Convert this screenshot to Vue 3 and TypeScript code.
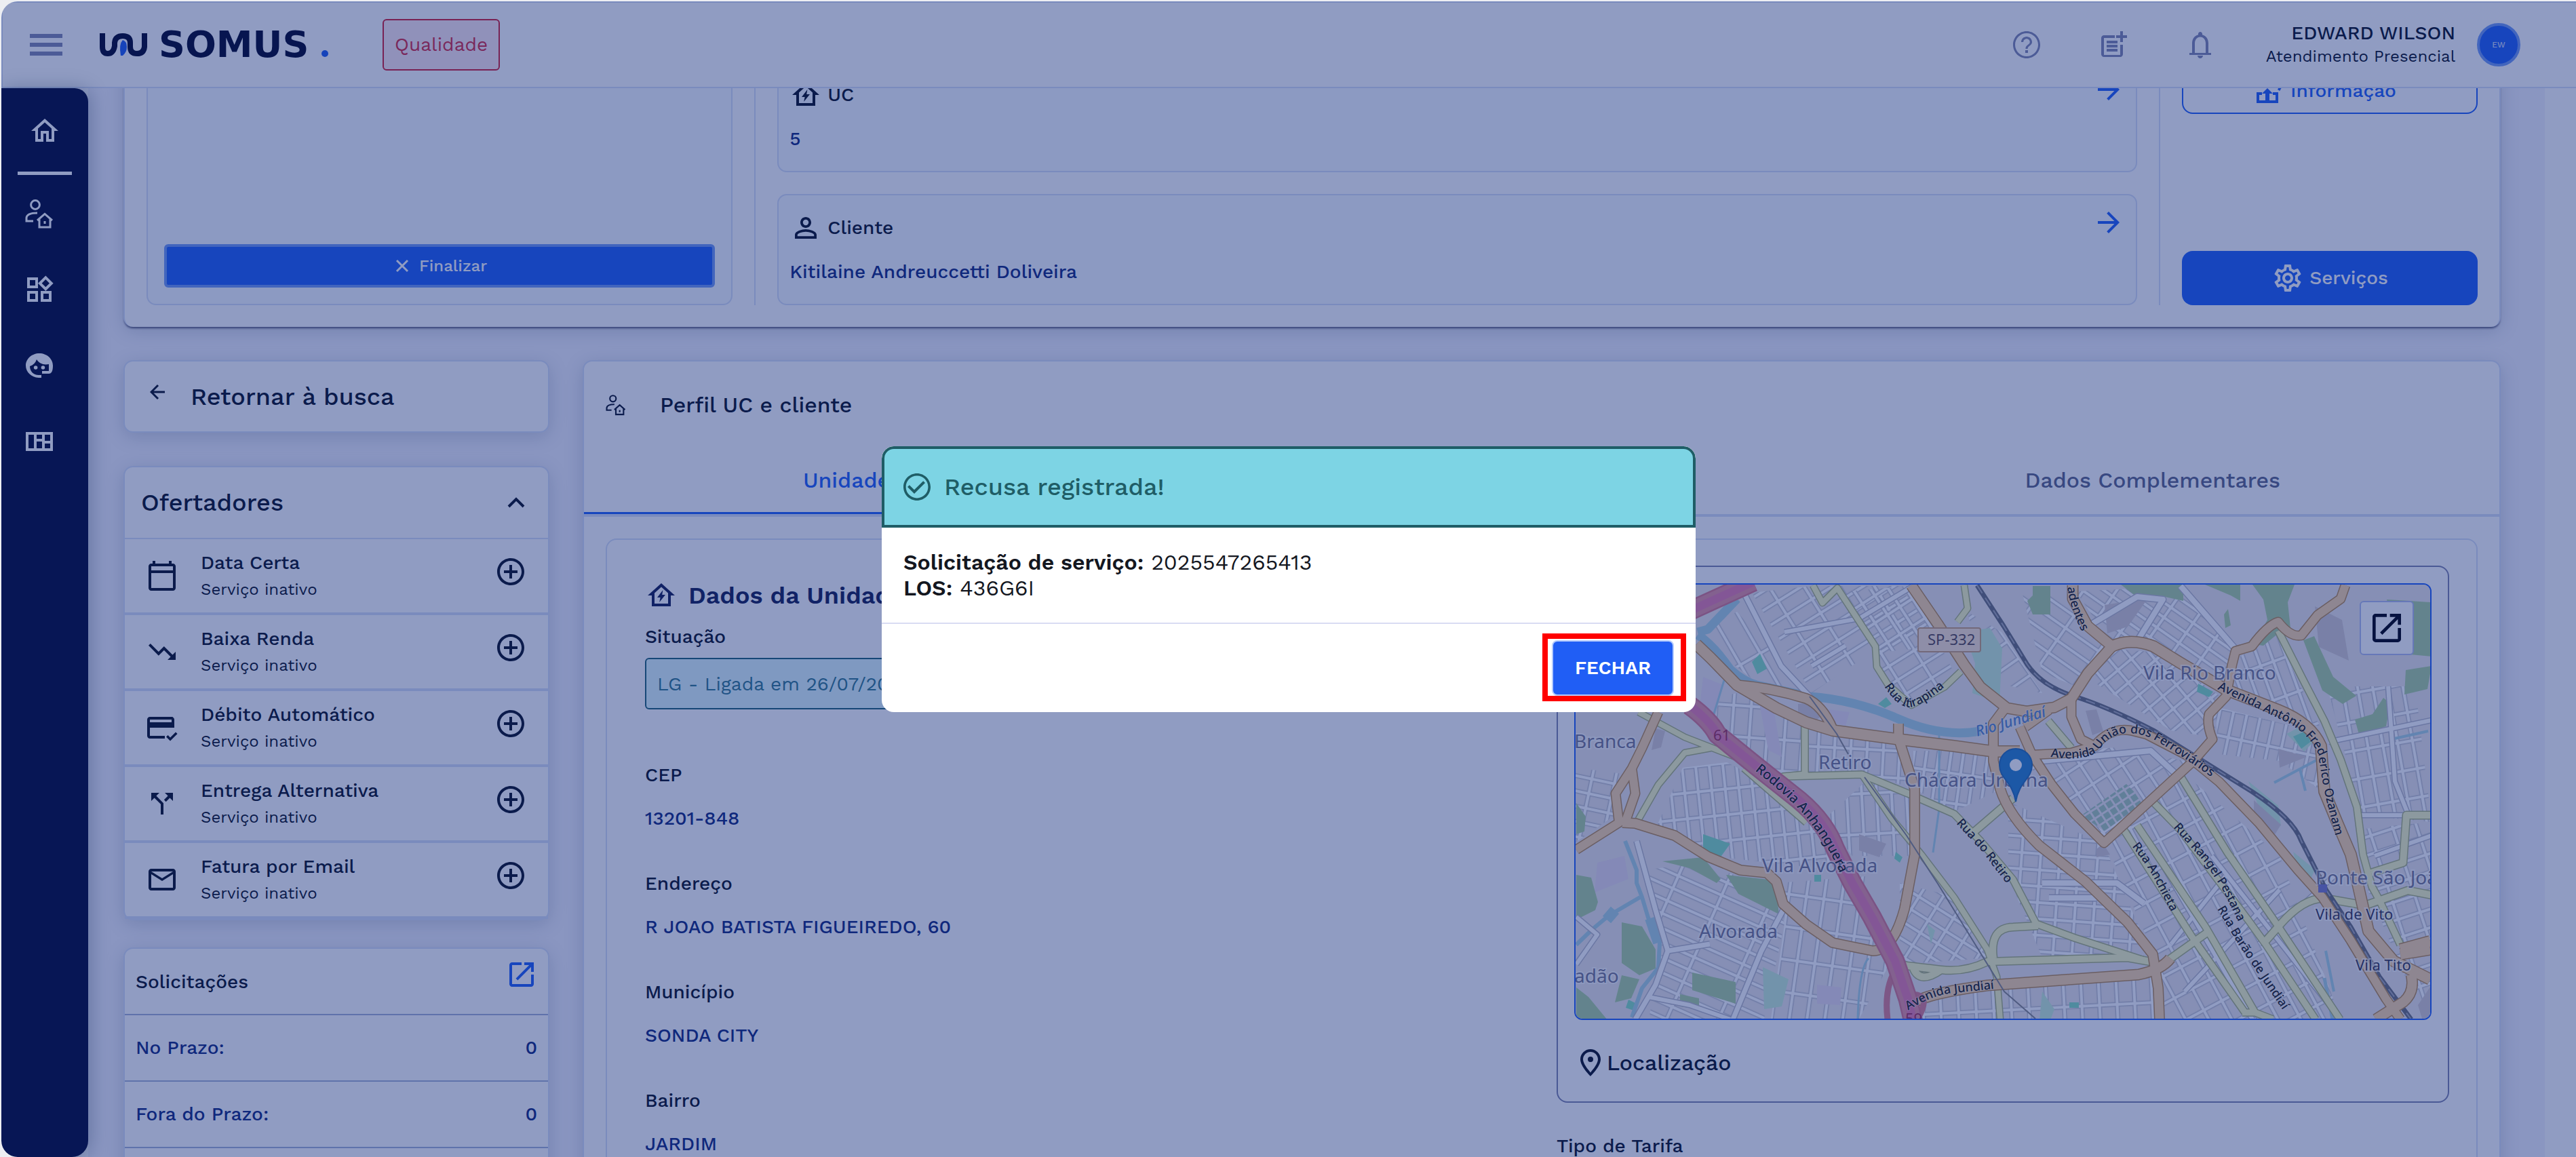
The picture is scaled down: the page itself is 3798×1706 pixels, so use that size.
<script setup lang="ts">
import { ref } from 'vue'

interface Offer { name: string; icon: string }
interface Field { label: string; value: string }
interface Road { d: string; w: number }
interface District { points: string; angle: number; w: number; h: number }
interface Place { x: number; y: number; text: string; minor?: boolean }
interface Street { id: string; d: string; text: string; size?: number; river?: boolean }

const icons = {
  help: 'M11 18h2v-2h-2v2zm1-16C6.48 2 2 6.48 2 12s4.48 10 10 10 10-4.48 10-10S17.52 2 12 2zm0 18.5c-4.69 0-8.5-3.81-8.5-8.5S7.31 3.5 12 3.5s8.5 3.81 8.5 8.5-3.81 8.5-8.5 8.5zm0-14.5c-2.21 0-4 1.79-4 4h1.6c0-1.33 1.07-2.4 2.4-2.4s2.4 1.07 2.4 2.4c0 2-3.2 1.9-3.2 5h1.6c0-2.25 3.2-2.5 3.2-5 0-2.21-1.79-4-4-4z',
  postAdd: 'M17 19.5H5V7h8V5H5c-1.1 0-2 .9-2 2v12c0 1.1.9 2 2 2h12c1.1 0 2-.9 2-2v-7h-2zM19 2h-2v3h-3v2h3v3h2V7h3V5h-3zM7 9h8v2H7zM7 12h8v2H7zM7 15h8v2H7z',
  bell: 'M12 22c1.1 0 2-.9 2-2h-4c0 1.1.9 2 2 2zm6-4v-7c0-3.07-1.63-5.64-4.5-6.32V4c0-.83-.67-1.5-1.5-1.5s-1.5.67-1.5 1.5v.68C7.64 5.36 6 7.92 6 11v7H4v1.5h16V18zm-2 0H8v-7c0-2.48 1.51-4.7 4-4.7s4 2.22 4 4.7z',
  home: 'M12 5.69l5 4.5V18h-2v-6H9v6H7v-7.81l5-4.5M12 3L2 12h3v8h6v-6h2v6h6v-8h3L12 3z',
  widgets: 'M16.66 4.52l2.83 2.83-2.83 2.83-2.83-2.83 2.83-2.83M9 5v4H5V5h4m10 10v4h-4v-4h4M9 15v4H5v-4h4m7.66-13.31L11 7.34 16.66 13l5.66-5.66-5.66-5.65zM11 3H3v8h8V3zm10 10h-8v8h8v-8zm-10 0H3v8h8v-8z',
  board: 'M2 5v14h20V5zm2 2h4v10H4zm6 0h4v3h-4zm6 0h4v4.5h-4zm-6 5h4v5h-4zm6 1.5h4V17h-4z',
  calendar: 'M20 3h-1V1h-2v2H7V1H5v2H4c-1.1 0-2 .9-2 2v16c0 1.1.9 2 2 2h16c1.1 0 2-.9 2-2V5c0-1.1-.9-2-2-2zm0 18H4V10h16v11zm0-13H4V5h16v3z',
  down: 'M16 18l2.29-2.29-4.88-4.88-4 4L2 7.41 3.41 6l6 6 4-4 6.3 6.29L22 12v6z',
  card: 'M19 4H3c-1.1 0-2 .9-2 2v12c0 1.1.9 2 2 2h11v-2H3v-6h18V6c0-1.1-.9-2-2-2zm0 4H3V6h16zM18 21.8l-3-3 1.3-1.3 1.7 1.7 4-4 1.3 1.3z',
  split: 'M14 4l2.29 2.29-2.88 2.88 1.42 1.42 2.88-2.88L20 10V4zm-4 0H4v6l2.29-2.29 4.71 4.7V20h2v-8.41l-5.29-5.3z',
  mail: 'M22 6c0-1.1-.9-2-2-2H4c-1.1 0-2 .9-2 2v12c0 1.1.9 2 2 2h16c1.1 0 2-.9 2-2V6zm-2 0l-8 5-8-5h16zm0 12H4V8l8 5 8-5v10z',
  plus: 'M13 7h-2v4H7v2h4v4h2v-4h4v-2h-4V7zm-1-5C6.48 2 2 6.48 2 12s4.48 10 10 10 10-4.48 10-10S17.52 2 12 2zm0 18c-4.41 0-8-3.59-8-8s3.59-8 8-8 8 3.59 8 8-3.59 8-8 8z',
  open: 'M19 19H5V5h7V3H5c-1.11 0-2 .9-2 2v14c0 1.1.89 2 2 2h14c1.1 0 2-.9 2-2v-7h-2v7zM14 3v2h3.59l-9.83 9.83 1.41 1.41L19 6.41V10h2V3h-7z',
  person: 'M12 5.9a2.1 2.1 0 110 4.2 2.1 2.1 0 010-4.2m0 9c2.97 0 6.1 1.46 6.1 2.1v1.1H5.9V17c0-.64 3.13-2.1 6.1-2.1M12 4C9.79 4 8 5.79 8 8s1.79 4 4 4 4-1.79 4-4-1.79-4-4-4zm0 9c-2.67 0-8 1.34-8 4v3h16v-3c0-2.66-5.33-4-8-4z',
  houseBolt: 'M12 3L2 12h3v8h14v-8h3zM7 18v-7.8l5-4.5 5 4.5V18zM13.2 8l-4.2 5.5h2.3l-.7 3.5 4.4-5.5h-2.4z',
  gear: 'M19.43 12.98c.04-.32.07-.64.07-.98 0-.34-.03-.66-.07-.98l2.11-1.65c.19-.15.24-.42.12-.64l-2-3.46c-.09-.16-.26-.25-.44-.25-.06 0-.12.01-.17.03l-2.49 1c-.52-.4-1.08-.73-1.69-.98l-.38-2.65C14.46 2.18 14.25 2 14 2h-4c-.25 0-.46.18-.49.42l-.38 2.65c-.61.25-1.17.59-1.69.98l-2.49-1c-.06-.02-.12-.03-.18-.03-.17 0-.34.09-.43.25l-2 3.46c-.13.22-.07.49.12.64l2.11 1.65c-.04.32-.07.65-.07.98 0 .33.03.66.07.98l-2.11 1.65c-.19.15-.24.42-.12.64l2 3.46c.09.16.26.25.44.25.06 0 .12-.01.17-.03l2.49-1c.52.4 1.08.73 1.69.98l.38 2.65c.03.24.24.42.49.42h4c.25 0 .46-.18.49-.42l.38-2.65c.61-.25 1.17-.59 1.69-.98l2.49 1c.06.02.12.03.18.03.17 0 .34-.09.43-.25l2-3.46c.12-.22.07-.49-.12-.64l-2.11-1.65zm-1.98-1.71c.04.31.05.52.05.73 0 .21-.02.43-.05.73l-.14 1.13.89.7 1.08.84-.7 1.21-1.27-.51-1.04-.42-.9.68c-.43.32-.84.56-1.25.73l-1.06.43-.16 1.13-.2 1.35h-1.4l-.19-1.35-.16-1.13-1.06-.43c-.43-.18-.83-.41-1.23-.71l-.91-.7-1.06.43-1.27.51-.7-1.21 1.08-.84.89-.7-.14-1.13c-.03-.31-.05-.54-.05-.74s.02-.43.05-.73l.14-1.13-.89-.7-1.08-.84.7-1.21 1.27.51 1.04.42.9-.68c.43-.32.84-.56 1.25-.73l1.06-.43.16-1.13.2-1.35h1.39l.19 1.35.16 1.13 1.06.43c.43.18.83.41 1.23.71l.91.7 1.06-.43 1.27-.51.7 1.21-1.07.85-.89.7.14 1.13zM12 8c-2.21 0-4 1.79-4 4s1.79 4 4 4 4-1.79 4-4-1.79-4-4-4zm0 6c-1.1 0-2-.9-2-2s.9-2 2-2 2 .9 2 2-.9 2-2 2z',
  check: 'M16.59 7.58L10 14.17l-3.59-3.58L5 12l5 5 8-8zM12 2C6.48 2 2 6.48 2 12s4.48 10 10 10 10-4.48 10-10S17.52 2 12 2zm0 18.2c-4.52 0-8.2-3.68-8.2-8.2S7.48 3.8 12 3.8s8.2 3.68 8.2 8.2-3.68 8.2-8.2 8.2z',
  pin: 'M12 2C8.13 2 4.5 5.13 4.5 9.5c0 5.25 7.5 12.5 7.5 12.5s7.5-7.25 7.5-12.5C19.5 5.13 15.87 2 12 2zM6.5 9.5C6.5 6.24 9.24 4 12 4s5.5 2.24 5.5 5.5c0 3-3.38 7.19-5.5 9.7-2.12-2.51-5.5-6.7-5.5-9.7zM12 7.5a2 2 0 100 4 2 2 0 000-4z',
  form: 'M3 21v-8h4v2H5v4h4.5v-5H7l4-4 4 4h-2.500v5H17v-4h-2v-2h4v8zM18.500 11l3.500-6 1.600 1-3.500 6z',
}

const offers: Offer[] = [
  { name: 'Data Certa', icon: icons.calendar },
  { name: 'Baixa Renda', icon: icons.down },
  { name: 'Débito Automático', icon: icons.card },
  { name: 'Entrega Alternativa', icon: icons.split },
  { name: 'Fatura por Email', icon: icons.mail },
]
const deadlines: Field[] = [
  { label: 'No Prazo:', value: '0' },
  { label: 'Fora do Prazo:', value: '0' },
]
const fields: Field[] = [
  { label: 'CEP', value: '13201-848' },
  { label: 'Endereço', value: 'R JOAO BATISTA FIGUEIREDO, 60' },
  { label: 'Município', value: 'SONDA CITY' },
  { label: 'Bairro', value: 'JARDIM' },
]
const tabs = ['Unidade Consumidora', 'Endereços', 'Dados Complementares']
const activeTab = ref(0)
const situation = ref('LG - Ligada em 26/07/2017')
const dialogOpen = ref(true)

const districts: District[] = [
  { points: '262,12 350,2 480,2 535,80 560,130 497,178 455,140 446,95 350,160', angle: -32, w: 44, h: 24 },
  { points: '182,70 240,40 345,160 270,145 225,110', angle: 60, w: 90, h: 34 },
  { points: '400,10 495,2 545,90 450,100', angle: -33, w: 22, h: 34 },
  { points: '185,170 240,160 340,205 340,278 300,280 200,190', angle: 4, w: 26, h: 46 },
  { points: '345,215 480,235 500,300 430,280 345,278', angle: 3, w: 24, h: 40 },
  { points: '500,245 615,245 622,305 560,335 500,300', angle: 8, w: 18, h: 44 },
  { points: '225,262 300,300 380,378 375,420 200,400 120,360 160,270', angle: -6, w: 20, h: 38 },
  { points: '430,290 500,310 495,400 410,400 370,345', angle: -3, w: 22, h: 60 },
  { points: '2,270 80,280 60,340 2,380', angle: 12, w: 34, h: 22 },
  { points: '110,420 190,410 290,450 310,500 280,640 110,640 130,540', angle: 24, w: 70, h: 20 },
  { points: '300,440 430,430 465,560 420,640 290,640 310,500', angle: 8, w: 26, h: 48 },
  { points: '480,440 560,460 615,550 480,560', angle: 32, w: 30, h: 22 },
  { points: '480,605 860,575 862,640 500,640', angle: -3, w: 26, h: 40 },
  { points: '640,320 780,382 850,545 690,550 640,430', angle: 4, w: 28, h: 24 },
  { points: '655,250 700,300 780,378 860,320 910,262 800,240', angle: -33, w: 26, h: 34 },
  { points: '785,385 895,275 1040,400 1130,640 870,640 855,545', angle: -28, w: 30, h: 36 },
  { points: '760,140 800,95 860,100 960,170 940,225 880,215', angle: -40, w: 26, h: 24 },
  { points: '740,10 900,2 975,95 965,150 850,80 790,85', angle: 35, w: 40, h: 18 },
  { points: '975,110 1035,75 1100,210 1030,180 965,150', angle: -20, w: 20, h: 54 },
  { points: '945,180 1085,215 1110,310 1040,260 950,250', angle: 12, w: 20, h: 40 },
  { points: '1110,150 1240,150 1264,350 1160,340', angle: -10, w: 22, h: 42 },
  { points: '1165,360 1264,350 1264,640 1230,590 1170,450', angle: -18, w: 34, h: 26 },
  { points: '580,40 630,70 690,160 600,140', angle: -35, w: 50, h: 30 },
  { points: '660,10 735,20 790,90 740,150 690,130', angle: 35, w: 60, h: 22 },
]

const forests = [
  'M930 0h52v24l-14-8z', 'M1000 0h62l-10 26 4 38-18 8-22 18-14-2 20-36-6-30z', 'M806 0h92v24l-36-8-30 4z',
  'M1075 82l16-6 28 60 34 28-20 12-30-20z', 'M1198 22l66 4v80l-44-4-14-30z', 'M1226 126l38-6-6 34-34 8z',
  'M1193 167l10 8-6 34-40 12-6-22 26-8z', 'M676 2l26 0 0 42-26 0-8-20 8-8z', 'M3 428l22 4 10 36-4 12-28 14z',
  'M70 498l30 6 20 34 0 28-24 10-26-18z', 'M70 576l26 6-12 28-24 6z', 'M3 594l18 14 28 34-46 0z',
  'M174 572l64 14v32l-64-20z', 'M156 604l28 6v16l-28-4z', 'M130 408l60-6 26 32-6 6-40-22z', 'M224 428l72 8 6 50-60-30z', 'M3 322l14 20-2 22-12 4z',
  'M958 44l6-8 4 24-8 4z',
]
const garden = 'M748 340l66-46 26 26-58 44z'
const parks = [
  'M575 70l38-6 18 30-4 80-40-14 4-44z', 'M278 564l38 18-10 40-26 4z', 'M1060 394l32 26-6 14-20-14z', 'M520 500l12 10-6 20z',
  'M690 600l18 26-6 16-16 0z', 'M994 290l44 36 4 30-26-12z', 'M1050 220l20-10 20 22-14 14z',
]
const pitches = ['M262 114l12-12 10 22-14 8z', 'M190 368l40 14-16 22-24-6z', 'M448 176l12-10 8 10-10 6z', 'M920 146l22 12-6 8-18-8z', 'M1060 224l18-8 10 14-16 12z', 'M354 428l10 0 0 10-10 0z', 'M80 612l12 6-4 10-12-4z', 'M474 394l10 8-4 8-8-6z', 'M730 616h14v8h-14z']
const blocks = ['M330 176l24-2 10 20-14 12-20-12z', 'M120 212l14 4-6 24-14 4z', 'M420 368l40 14-10 20-30-10z', 'M782 30l64-10-30 42-30 10z', 'M1038 242l42 12-40 16z', 'M1002 318l40 36-10 16-30-30z', 'M754 186l16-2 10 32-16 6z', 'M770 390l10-8 10 16-20 4z', 'M1092 32l40 20 10 60-44-20z', 'M1244 620l20-30v50h-14z']
const industry = ['M190 136l30 12-16 60-20-20z', 'M272 170l20 0 14 84-20-10z', 'M376 184l30 4-6 20-24-6z', 'M34 410l40-10 6 34-50 20z', 'M358 590l36 4-2 26-34-2z']
const waters = [
  { d: 'M240 21L197 66 182 70M182 74Q206 90 230 125 250 143 269 148L347 165Q415 170 478 198T599 216', w: 13 },
  { d: 'M221 141L203 200M538 218V331L529 395M434 551Q420 565 418 641', w: 3 },
  { d: 'M75 378L92 421 92 440 100 461 109 491 126 528 124 565 100 595 85 638M97 461L51 488 27 508 3 531', w: 6 },
  { d: 'M112 492l12 36M60 480l-12 14', w: 16 },
  { d: 'M1032 292L1096 258M1070 272l8 32M1120 600l-12-60M1205 228l54-12', w: 4 },
  { d: 'M1106 580L1118 641M90 280L78 344', w: 5 },
]
const minor: Road[] = [
  { d: 'M250 12L305 120 347 165 361 185', w: 7 }, { d: 'M310 70L420 50 500 2M350 120l50-30', w: 6 },
  { d: 'M92 378L120 480 138 540 120 590 90 641M138 540L200 530', w: 7 }, { d: 'M308 480L276 540 234 641', w: 7 },
  { d: 'M110 608L170 620 230 641M3 490L34 516 3 560', w: 6 }, { d: 'M690 260L850 245 890 282', w: 8 },
  { d: 'M894 2L975 95M760 60L830 18 868 22 826 90', w: 8 }, { d: 'M940 400L1130 641M860 400L1000 641', w: 6 },
  { d: 'M1112 232L1264 200M1200 150L1210 290 1230 340', w: 6 }, { d: 'M690 440H800L840 470M700 462H770', w: 8 },
  { d: 'M1010 530L1120 430M880 530L960 430M900 600L1040 450', w: 6 }, { d: 'M1150 340h110M1180 400l84-30', w: 6 },
]
const secondary: Road[] = [
  { d: 'M352 1L366 27 388 5 444 91 446 121 463 148 497 178 546 151 570 128', w: 8 },
  { d: 'M575 1L580 35 565 55', w: 8 }, { d: 'M340 208V280L308 283 424 280 492 308 560 338 599 378 647 435 681 500 738 521 843 555', w: 9 },
  { d: 'M424 280L468 345 512 398 560 461 609 538 623 578 628 641', w: 8 },
  { d: 'M647 315L589 365M463 525Q474 560 490 562T541 568 609 556L816 550 850 556M500 566Q510 590 541 568M618 551Q612 506 647 505L684 503', w: 10 },
  { d: 'M95 188L163 225 240 255M201 241L163 248 124 295 92 351M250 271L342 351', w: 8 },
  { d: 'M1038 68L1077 145 1106 201 1130 258 1154 328 1163 398 1176 445 1187 465 1218 531', w: 9 },
  { d: 'M699 201L733 241M893 281L963 395 1036 501 1129 641M854 321L893 361 994 495 1020 531 1093 641', w: 9 },
  { d: 'M830 355L931 505 1004 631 1030 641M810 361L910 518 989 631M1004 631H985', w: 9 },
  { d: 'M1020 525L1041 501Q1077 460 1109 463L1166 473 1229 451 1265 458M874 555L936 511M1265 340H1227L1222 410 1175 425', w: 10 },
]
const primary: Road[] = [
  { d: 'M180 88L201 108 240 148 298 182 342 203 381 215 478 228 560 238 618 246 657 246', w: 15 },
  { d: 'M240 148Q290 152 342 168 366 178 381 213M478 205V226L492 270 502 301V398L487 478Q470 540 440 540L415 535 381 528 342 501 308 471 298 438 284 425 245 421 197 401 148 370 90 352 71 351', w: 13 },
  { d: 'M497 1L536 58 575 118 599 151 638 182 667 187 708 181 733 168 757 131 793 91 757 61 735 21V1', w: 14 },
  { d: 'M793 91Q820 78 854 91L893 115 961 155 1038 185Q1086 204 1101 238L1106 305 1125 351 1145 398 1156 445 1171 511 1208 555 1262 582M1218 538L1262 526M1218 545L1262 538', w: 15 },
  { d: 'M124 188L100 241 85 271 61 308 66 351 3 391M85 271L90 308 75 351', w: 12 },
  { d: 'M633 185L618 205V260L628 301Q640 340 686 385L754 438 816 498 853 545 861 595 863 641', w: 13 },
  { d: 'M657 210L675 251 704 295 738 338 781 381 839 328 912 261 941 228Q932 206 936 191L961 165 970 118 975 98 999 91Q1022 60 1038 55 1056 78 1072 75L1096 45 1130 21 1137 1', w: 12 },
  { d: 'M675 251L733 248 767 238Q790 210 820 215L844 221 902 251 951 291 1009 351 1067 421 1103 461 1145 525 1197 611 1218 641M733 170V195L747 228 767 238M665 210L700 185', w: 12 },
  { d: 'M492 625Q500 605 609 591L832 575Q866 568 879 551M1182 641L1223 615Q1240 600 1234 575', w: 14 },
]
const motorway = 'M172 38L264 -4M170 178Q200 200 211 221L269 268 332 318Q370 350 385 390L410 440 439 490 473 555 492 611 500 645'
const rail = 'M594 1L633 61 668 118Q690 150 738 165T854 215L912 251 999 305Q1060 345 1072 378L1109 451 1145 505 1187 578 1234 641'

const places: Place[] = [
  { x: 839, y: 140, text: 'Vila Rio Branco' }, { x: 360, y: 272, text: 'Retiro' }, { x: 487, y: 298, text: 'Chácara Urbana' },
  { x: 0, y: 241, text: 'Branca' }, { x: 277, y: 424, text: 'Vila Alvorada' }, { x: 184, y: 521, text: 'Alvorada' },
  { x: 0, y: 587, text: 'adão' }, { x: 1093, y: 442, text: 'Ponte São João' },
  { x: 1093, y: 494, text: 'Vila de Vito', minor: true }, { x: 1152, y: 569, text: 'Vila Tito', minor: true },
]
const streets: Street[] = [
  { id: 's1', d: 'M457 150Q480 186 500 180T552 146L600 110', text: 'Rua Itirapina' },
  { id: 's2', d: 'M594 224L712 190', text: 'Rio Jundiaí', size: 22, river: true },
  { id: 's3', d: 'M702 254Q760 262 775 242 800 206 850 226 880 242 940 284L980 320', text: 'Avenida União dos Ferroviários' },
  { id: 's4', d: 'M948 154L1040 198Q1082 216 1097 250 1104 300 1112 330L1130 400', text: 'Avenida Antônio Frederico Ozanam' },
  { id: 's5', d: 'M266 274Q330 324 350 354 375 384 398 440', text: 'Rodovia Anhanguera', size: 20 },
  { id: 's6', d: 'M563 352L600 392 660 470', text: 'Rua do Retiro' },
  { id: 's7', d: 'M822 386Q850 420 862 448L900 520', text: 'Rua Anchieta' },
  { id: 's8', d: 'M883 358L930 410 956 450 1010 560', text: 'Rua Rangel Pestana' },
  { id: 's9', d: 'M948 478L980 532 1060 650', text: 'Rua Barão de Jundiaí' },
  { id: 's10', d: 'M492 628Q530 604 560 602L640 594', text: 'Avenida Jundiaí' },
  { id: 's11', d: 'M727 4Q732 44 760 90', text: 'adentes' },
]
</script>

<template>
  <div class="page">
    <div class="shell">
      <header class="topbar">
        <button class="plain menu" aria-label="Menu"><svg width="48" height="32" viewBox="0 0 48 32"><path d="M0 0h48v6H0zM0 13h48v6H0zM0 26h48v6H0z" /></svg></button>
        <a class="logo" href="#" aria-label="UN Somus">
          <svg class="mark" width="72" height="36" viewBox="0 0 72 36">
            <path d="M5 1v20q0 10 8 10t10-11V15Q24 5 35 5t11 10v6q0 10 10 10t11-10V1" />
            <path class="drop" d="M35 11q6 2 6 10t-6 13h-3q-3-17 3-23z" />
          </svg>
          <span class="word">SOMUS</span><i class="dot"></i>
        </a>
        <span class="env">Qualidade</span>
        <div class="tools">
          <button v-for="(d, k) in { Ajuda: icons.help, Nota: icons.postAdd, Avisos: icons.bell }" :key="k" class="plain" :aria-label="k"><svg class="ic" viewBox="0 0 24 24"><path :d="d" /></svg></button>
        </div>
        <div class="user">
          <div class="who"><b>EDWARD WILSON</b><span>Atendimento Presencial</span></div>
          <span class="avatar">EW</span>
        </div>
      </header>

      <div class="body">
        <nav class="rail">
          <a class="first" href="#" aria-label="Início"><svg class="ic" viewBox="0 0 24 24"><path :d="icons.home" /></svg></a>
          <hr />
          <a href="#" aria-label="Perfil"><svg class="ic line" viewBox="0 0 24 24"><circle cx="9" cy="5.5" r="3.2" /><path d="M7.5 17.5H2.5v-2.5q.5-3.5 8-3.5M10.5 17l5.5-4.8 5.5 4.8M12 16v6h8v-6M16 17.5v2" /></svg></a>
          <a href="#" aria-label="Serviços"><svg class="ic" viewBox="0 0 24 24"><path :d="icons.widgets" /></svg></a>
          <a href="#" aria-label="Atendimento"><svg class="ic" viewBox="0 0 24 24"><path fill-rule="evenodd" d="M12 3C6.5 3 2 7 2 12c0 4.8 4 8.7 9.5 9h2v-2h-2C7.5 19 5 16 5 12.5c2.5-.8 4.2-2.5 5-5 2 3 5 4.3 9 3.5v5h-5v2h5c2 0 3-2 3-6 0-5-4.5-9-10-9z" /><circle cx="9.3" cy="13.5" r="1.4" /><circle cx="14.7" cy="13.5" r="1.4" /></svg></a>
          <a href="#" aria-label="Painel"><svg class="ic" viewBox="0 0 24 24"><path fill-rule="evenodd" :d="icons.board" /></svg></a>
        </nav>

        <main class="content">
          <section class="summary card">
            <div class="pane call"><button class="finish"><svg width="22" height="22" viewBox="0 0 22 22"><path d="M3 3l16 16M19 3L3 19" /></svg>Finalizar</button></div>
            <i class="vr"></i>
            <div class="stack">
              <article class="pane info">
                <h3><svg class="ic" viewBox="0 0 24 24"><path fill-rule="evenodd" :d="icons.houseBolt" /></svg>UC<button class="plain go" aria-label="Abrir UC"><svg width="48" height="32" viewBox="0 4 24 16"><path d="M12 4l-1.4 1.4L16.2 11H4v2h12.2l-5.6 5.6L12 20l8-8z" /></svg></button></h3>
                <p>5</p>
              </article>
              <article class="pane info">
                <h3><svg class="ic" viewBox="0 0 24 24"><path :d="icons.person" /></svg>Cliente<button class="plain go" aria-label="Abrir cliente"><svg width="48" height="32" viewBox="0 4 24 16"><path d="M12 4l-1.4 1.4L16.2 11H4v2h12.2l-5.6 5.6L12 20l8-8z" /></svg></button></h3>
                <p>Kitilaine Andreuccetti Doliveira</p>
              </article>
            </div>
            <i class="vr"></i>
            <div class="actions">
              <button class="outline"><svg class="ic" viewBox="0 0 24 24"><path :d="icons.form" /></svg>Informação</button>
              <button class="solid"><svg class="ic" viewBox="0 0 24 24"><path :d="icons.gear" /></svg>Serviços</button>
            </div>
          </section>

          <div class="columns">
            <aside>
              <button class="card back"><svg width="24" height="24" viewBox="0 0 24 24"><path d="M22 12H3M12 2L2 12l10 10" /></svg>Retornar à busca</button>
              <section class="card offers">
                <h2>Ofertadores<svg width="26" height="16" viewBox="0 0 26 16"><path d="M2 14L13 3l11 11" /></svg></h2>
                <ul>
                  <li v-for="o in offers" :key="o.name">
                    <svg class="ic" viewBox="0 0 24 24"><path :d="o.icon" /></svg>
                    <div><b>{{ o.name }}</b><span>Serviço inativo</span></div>
                    <button class="plain add" :aria-label="'Adicionar ' + o.name"><svg class="ic" viewBox="0 0 24 24"><path :d="icons.plus" /></svg></button>
                  </li>
                </ul>
              </section>
              <section class="card requests">
                <h2>Solicitações<a href="#" aria-label="Abrir solicitações"><svg class="ic" viewBox="0 0 24 24"><path :d="icons.open" /></svg></a></h2>
                <dl><div v-for="d in deadlines" :key="d.label"><dt>{{ d.label }}</dt><dd>{{ d.value }}</dd></div></dl>
              </section>
            </aside>

            <section class="card profile">
              <h2><svg class="line" width="34" height="34" viewBox="0 0 24 24"><circle cx="9" cy="5.5" r="3.2" /><path d="M7.5 17.5H2.5v-2.5q.5-3.5 8-3.5M10.5 17l5.5-4.8 5.5 4.8M12 16v6h8v-6M16 17.5v2" /></svg>Perfil UC e cliente</h2>
              <div class="tabs" role="tablist">
                <button v-for="(t, i) in tabs" :key="t" role="tab" :class="{ on: i === activeTab }" @click="activeTab = i">{{ t }}</button>
              </div>
              <div class="unit">
                <div class="data">
                  <h3><svg class="ic" viewBox="0 0 24 24"><path fill-rule="evenodd" :d="icons.houseBolt" /></svg>Dados da Unidade Consumidora</h3>
                  <label for="situation">Situação</label>
                  <input id="situation" v-model="situation" readonly />
                  <dl><div v-for="f in fields" :key="f.label"><dt>{{ f.label }}</dt><dd>{{ f.value }}</dd></div></dl>
                </div>
                <div class="place">
                  <figure>
                    <div class="map">
                      <svg viewBox="0 0 1264 640" preserveAspectRatio="xMidYMid slice">
                        <defs>
                          <pattern v-for="(g, i) in districts" :id="'g' + i" :key="i" :width="g.w" :height="g.h" patternUnits="userSpaceOnUse" :patternTransform="'rotate(' + g.angle + ')'">
                            <path :d="`M0 ${g.h / 2}H${g.w}M${g.w / 2} 0V${g.h}`" stroke="#c2c2ca" stroke-width="7" />
                            <path :d="`M0 ${g.h / 2}H${g.w}M${g.w / 2} 0V${g.h}`" stroke="#fff" stroke-width="4" />
                          </pattern>
                          <pattern id="plots" width="12" height="12" patternUnits="userSpaceOnUse" patternTransform="rotate(-33)"><path d="M1 1h9v9H1z" fill="#a9c9b4" /></pattern>
                          <path v-for="s in streets" :id="s.id" :key="s.id" :d="s.d" />
                        </defs>
                        <rect width="1264" height="640" fill="#ece8e8" />
                        <polygon v-for="(g, i) in districts" :key="i" :points="g.points" :fill="'url(#g' + i + ')'" />
                        <path v-for="d in industry" :key="d" :d="d" fill="#e9dcea" />
                        <path v-for="d in parks" :key="d" :d="d" fill="#c8eed4" />
                        <path v-for="d in forests" :key="d" :d="d" fill="#add19e" />
                        <path :d="garden" fill="#ece8e8" /><path :d="garden" fill="url(#plots)" />
                        <path v-for="d in pitches" :key="d" :d="d" fill="#88e0be" />
                        <path v-for="d in blocks" :key="d" :d="d" fill="#d5cccd" />
                        <g class="roads">
                          <path v-for="r in waters" :key="r.d" :d="r.d" stroke="#aad3df" :stroke-width="r.w" />
                          <path v-for="r in minor" :key="r.d" :d="r.d" stroke="#b9b9c4" :stroke-width="r.w + 3" />
                          <path v-for="r in minor" :key="r.d" :d="r.d" stroke="#fff" :stroke-width="r.w" />
                          <path v-for="r in secondary" :key="r.d" :d="r.d" stroke="#adb57c" :stroke-width="r.w + 3" />
                          <path v-for="r in secondary" :key="r.d" :d="r.d" stroke="#f7fabf" :stroke-width="r.w" />
                          <path :d="rail" stroke="#6b6f7a" stroke-width="7" /><path :d="rail" stroke="#a9abb5" stroke-width="2" stroke-dasharray="14 8" />
                          <path v-for="r in primary" :key="r.d" :d="r.d" stroke="#ba8d50" :stroke-width="r.w + 3" />
                          <path v-for="r in primary" :key="r.d" :d="r.d" stroke="#fcd6a4" :stroke-width="r.w" />
                          <path d="M478 562Q456 590 462 641M492 605Q530 600 506 641" stroke="#dc8090" stroke-width="9" />
                          <path :d="motorway" stroke="#d9798c" stroke-width="29" /><path :d="motorway" stroke="#e892a2" stroke-width="24" /><path :d="motorway" stroke="#e87fae" stroke-width="12" />
                          <path d="M347 165L387 220 404 250" stroke="#888" stroke-width="2" /><path d="M428 284L490 370 536 441 634 600 680 640" stroke="#888" stroke-width="2" />
                        </g>
                        <text v-for="p in places" :key="p.text" :x="p.x" :y="p.y" :class="['town', { minor: p.minor }]">{{ p.text }}</text>
                        <text v-for="s in streets" :key="s.id" :class="['street', { river: s.river }]" :font-size="s.size ?? 18"><textPath :href="'#' + s.id">{{ s.text }}</textPath></text>
                        <rect x="507" y="64" width="92" height="35" rx="3" fill="#fbe6cf" stroke="#c9a27a" stroke-width="2" />
                        <text class="ref" x="521" y="89">SP-332</text>
                        <text class="road" x="205" y="230">61</text><text class="road" x="488" y="648">59</text>
                        <path d="M1097 442h13v12h-13z" fill="#7878c8" />
                        <path d="M651 320C646 290 627 286 627 266a24 24 0 0148 0c0 20-19 24-24 54z" fill="#2a81cb" stroke="#2570b5" stroke-width="2" /><circle cx="651" cy="266" r="9" fill="#fff" />
                      </svg>
                      <button class="expand" aria-label="Abrir mapa"><svg width="56" height="56" viewBox="0 0 24 24"><path :d="icons.open" /></svg></button>
                    </div>
                    <figcaption><svg class="ic" viewBox="0 0 24 24"><path fill-rule="evenodd" :d="icons.pin" /></svg>Localização</figcaption>
                  </figure>
                  <p class="tariff">Tipo de Tarifa</p>
                </div>
              </div>
            </section>
          </div>
        </main>
        <div class="track"></div>
      </div>

      <div v-if="dialogOpen" class="backdrop">
        <div class="dialog" role="alertdialog" aria-labelledby="dialog-title">
          <h2 id="dialog-title"><svg class="ic" viewBox="0 0 24 24"><path fill-rule="evenodd" :d="icons.check" /></svg>Recusa registrada!</h2>
          <div class="message"><p><b>Solicitação de serviço:</b> 2025547265413</p><p><b>LOS:</b> 436G6I</p></div>
          <footer><div class="focus"><button @click="dialogOpen = false">FECHAR</button></div></footer>
        </div>
      </div>
    </div>
  </div>
</template>

<style>
body { margin: 0; overflow: hidden; }
</style>

<style scoped>
.page { --ink: #0b1226; --navy: #12297f; --blue: #205ef5; --line: #d7e0f6; box-sizing: border-box; height: 100vh; padding: 2px 0 0 2px; background: #edeef2; font-family: "Work Sans", Inter, sans-serif; font-size: 28px; font-weight: 500; line-height: 32px; color: var(--ink); }
.page *, .page *::after { box-sizing: border-box; }
h2, h3, p, ul, dl, dd, figure { margin: 0; padding: 0; font-weight: 500; }
button, input { font: inherit; color: inherit; margin: 0; }
button { cursor: pointer; }
a { color: inherit; text-decoration: none; }
svg { display: block; flex: none; fill: currentColor; }
.ic { width: 48px; height: 48px; }
.line { fill: none; stroke: currentColor; stroke-width: 1.5; }
.plain { border: 0; background: none; padding: 0; }
.shell { position: relative; display: flex; flex-direction: column; height: 100%; border-radius: 24px 0 0 24px; overflow: hidden; background: #fff; }
.topbar { display: flex; align-items: center; height: 128px; flex: none; padding: 0 82px 0 40px; border: 2px solid var(--line); border-right: 0; background: #fff; }
.menu { color: #8187af; }
.logo { display: flex; align-items: flex-end; width: 338px; height: 36px; margin: 0 80px 0 54px; color: #02062d; }
.mark { fill: none; stroke: currentColor; stroke-width: 8; }
.mark .drop { fill: #1f5cf0; stroke: none; }
.word { margin-left: 16px; font: 700 54px/36px "DejaVu Sans", sans-serif; }
.dot { width: 10px; height: 10px; margin-left: auto; border-radius: 50%; background: #1f5cf0; }
.env { padding: 20px 16px; border: 2px solid #d21f35; border-radius: 6px; background: #ffebf0; color: #d62a42; font-weight: 400; }
.tools { display: flex; gap: 80px; margin: 0 73px 0 auto; color: #8187af; }
.user { display: flex; align-items: center; gap: 32px; }
.who { display: flex; flex-direction: column; align-items: flex-end; line-height: 35px; }
.who b { font-weight: 500; }
.who span { font-size: 24px; font-weight: 400; }
.avatar { display: grid; place-items: center; width: 64px; height: 64px; border: 4px solid #6f9af5; border-radius: 50%; background: var(--blue); color: #d0ddfb; font-size: 12px; }
.body { display: flex; flex: 1; min-height: 0; }
.rail { z-index: 1; display: flex; flex-direction: column; gap: 64px; width: 128px; flex: none; padding: 39px 0 0 32px; border-radius: 0 20px 24px 24px; background: #030936; color: #fff; box-shadow: 4px 0 28px rgba(20, 40, 60, .3); }
.rail .first { margin: 0 0 -28px 8px; }
.rail hr { width: 80px; height: 5px; margin: 0 0 -31px -8px; border: 0; background: #fff; }
.content { flex: 1; min-width: 0; overflow: hidden; padding: 0 65px 0 52px; background: #f4f4fd; }
.track { width: 46px; background: #fff; }
.card { border: 2px solid var(--line); border-radius: 14px; background: #fff; box-shadow: 0 6px 28px rgba(40, 60, 90, .2); }
.summary { display: flex; gap: 32px; margin-top: -74px; padding: 32px; box-shadow: 0 3px 3px -1px rgba(0, 0, 40, .6), 0 6px 28px rgba(40, 60, 90, .2); border-bottom: 0; }
.pane { border: 2px solid var(--line); border-radius: 14px; background: #f8fbff; }
.call { display: flex; align-items: flex-end; width: calc(25% + 5px); padding: 24px; }
.finish { display: flex; align-items: center; justify-content: center; gap: 14px; width: 100%; height: 64px; padding: 0 0 0 4px; border: 4px solid #6f9af5; border-radius: 6px; background: var(--blue); color: #fff; font-size: 24px; }
.finish svg, .back svg, .offers h2 svg { fill: none; stroke: currentColor; stroke-width: 3; }
.vr { width: 2px; background: var(--line); }
.stack { display: flex; flex: 1; flex-direction: column; gap: 32px; }
.info { height: 164px; padding: 24px 16px; }
.info h3 { display: flex; align-items: center; gap: 8px; height: 48px; font-size: 28px; }
.info p { margin-top: 25px; color: var(--navy); }
.go { align-self: flex-start; margin-left: auto; color: var(--blue); }
.actions { display: flex; flex-direction: column; justify-content: space-between; width: 436px; padding-top: 10px; }
.outline, .solid { display: flex; align-items: center; justify-content: center; gap: 8px; height: 80px; border: 0; border-radius: 16px; background: var(--blue); color: #fff; }
.outline { height: 68px; padding: 0 16px 0 0; border: 2px solid var(--blue); background: none; color: var(--blue); }
.columns { display: grid; grid-template-columns: 628px 1fr; gap: 49px; margin-top: 49px; align-items: start; }
aside { display: flex; flex-direction: column; }
.back { display: flex; align-items: center; gap: 36px; height: 107px; padding: 0 37px; font-size: 36px; line-height: 44px; }
.back svg { margin-bottom: 14px; }
.offers { margin-top: 49px; }
.offers h2 { display: flex; align-items: center; justify-content: space-between; height: 106px; padding: 0 34px 0 24px; border-bottom: 2px solid var(--line); font-size: 36px; }
.offers h2 svg { stroke-width: 4; }
.offers ul { list-style: none; }
.offers li { display: flex; height: 112px; padding: 16px 31px 0; border-bottom: 4px solid var(--line); }
.offers li > .ic { margin: 14px 33px 0 0; }
.offers li div { display: flex; flex: 1; flex-direction: column; }
.offers b { font-weight: 500; line-height: 38px; }
.offers span { font-size: 24px; font-weight: 400; line-height: 40px; }
.add { align-self: flex-start; margin-top: 8px; }
.requests { margin-top: 40px; padding-bottom: 98px; }
.requests h2 { display: flex; justify-content: space-between; height: 98px; padding: 14px 15px 0 16px; border-bottom: 2px solid #a5b2d4; font-size: 28px; line-height: 70px; }
.requests a { color: var(--blue); }
.requests dl div { display: flex; align-items: center; justify-content: space-between; height: 98px; padding: 0 16px; border-bottom: 2px solid #a5b2d4; color: var(--navy); }
.profile > h2 { display: flex; align-items: center; gap: 48px; height: 127px; padding: 0 30px; font-size: 32px; }
.tabs { display: flex; height: 102px; border-bottom: 4px solid var(--line); }
.tabs button { flex: 1 1 auto; border: 0; border-bottom: 3px solid transparent; background: none; color: #5d6588; font-size: 32px; }
.tabs .on { border-color: var(--blue); color: var(--blue); }
.unit { display: grid; grid-template-columns: 1fr 1fr; gap: 28px; margin: 32px; padding: 38px 40px 40px 56px; border: 2px solid var(--line); border-radius: 16px; }
.data { padding-top: 22px; }
.data h3 { display: flex; align-items: center; gap: 16px; height: 44px; margin: 0 0 23px; font-size: 36px; font-weight: 600; color: #161f55; }
.data label { display: block; }
.data input { display: block; width: 520px; height: 76px; margin: 15px 0 81px; padding: 0 16px; border: 2px solid #1e6275; border-radius: 6px; background: #e0f9fd; color: #30788f; font-weight: 400; }
.data dl { display: flex; flex-direction: column; gap: 64px; }
.data dd { margin-top: 32px; color: var(--navy); }
figure { padding: 24px 24px 35px; border: 2px solid #7e83ad; border-radius: 16px; }
.map { position: relative; height: 644px; border: 2px solid var(--blue); border-radius: 12px; overflow: hidden; }
.map > svg { width: 100%; height: 100%; }
.roads { fill: none; stroke-linejoin: round; }
.town { font: 28px "Noto Sans", sans-serif; fill: #777790; stroke: #fff; stroke-width: 4px; stroke-opacity: .6; paint-order: stroke; }
.minor { font-size: 22px; fill: #3a3a55; }
.street { font-family: "Noto Sans", sans-serif; fill: #222; stroke: #fff; stroke-width: 2px; stroke-opacity: .4; paint-order: stroke; }
.river { fill: #5b88c8; font-style: italic; }
.ref { font: 22px "Noto Sans", sans-serif; fill: #5a4a50; }
.road { font: 22px "Noto Sans", sans-serif; fill: #a03058; }
.expand { position: absolute; top: 24px; right: 24px; display: grid; place-items: center; width: 80px; height: 80px; padding: 0; border: 2px solid #b2bdec; border-radius: 6px; background: #fff; color: #000010; }
figcaption { display: flex; align-items: center; height: 44px; margin-top: 41px; font-size: 32px; }
.tariff { margin-top: 48px; }
.backdrop { position: absolute; z-index: 2; inset: 0; display: grid; place-items: center; background: rgba(12, 40, 123, .46); }
.dialog { width: 1200px; border-radius: 18px; overflow: hidden; background: #fff; color: #14171f; }
.dialog h2 { display: flex; align-items: center; gap: 16px; height: 120px; padding: 0 24px; border: 4px solid #1f5d66; border-radius: 18px 18px 0 0; background: #7dd4e4; color: #1f5d66; font-size: 36px; }
.message { padding: 32px; border-bottom: 2px solid #d9dcf3; font-size: 32px; line-height: 38px; }
.message p { font-weight: 400; }
.message b { font-weight: 600; }
.dialog footer { display: flex; justify-content: flex-end; padding: 24px 32px; }
.focus { position: relative; }
.focus::after { content: ""; position: absolute; inset: -10px -18px -8px -14px; border: 8px solid #f00; pointer-events: none; }
.focus button { display: block; width: 180px; height: 82px; border: 2px solid #b4cbfd; border-radius: 8px; background: var(--blue); color: #fff; font-weight: 600; }
</style>
